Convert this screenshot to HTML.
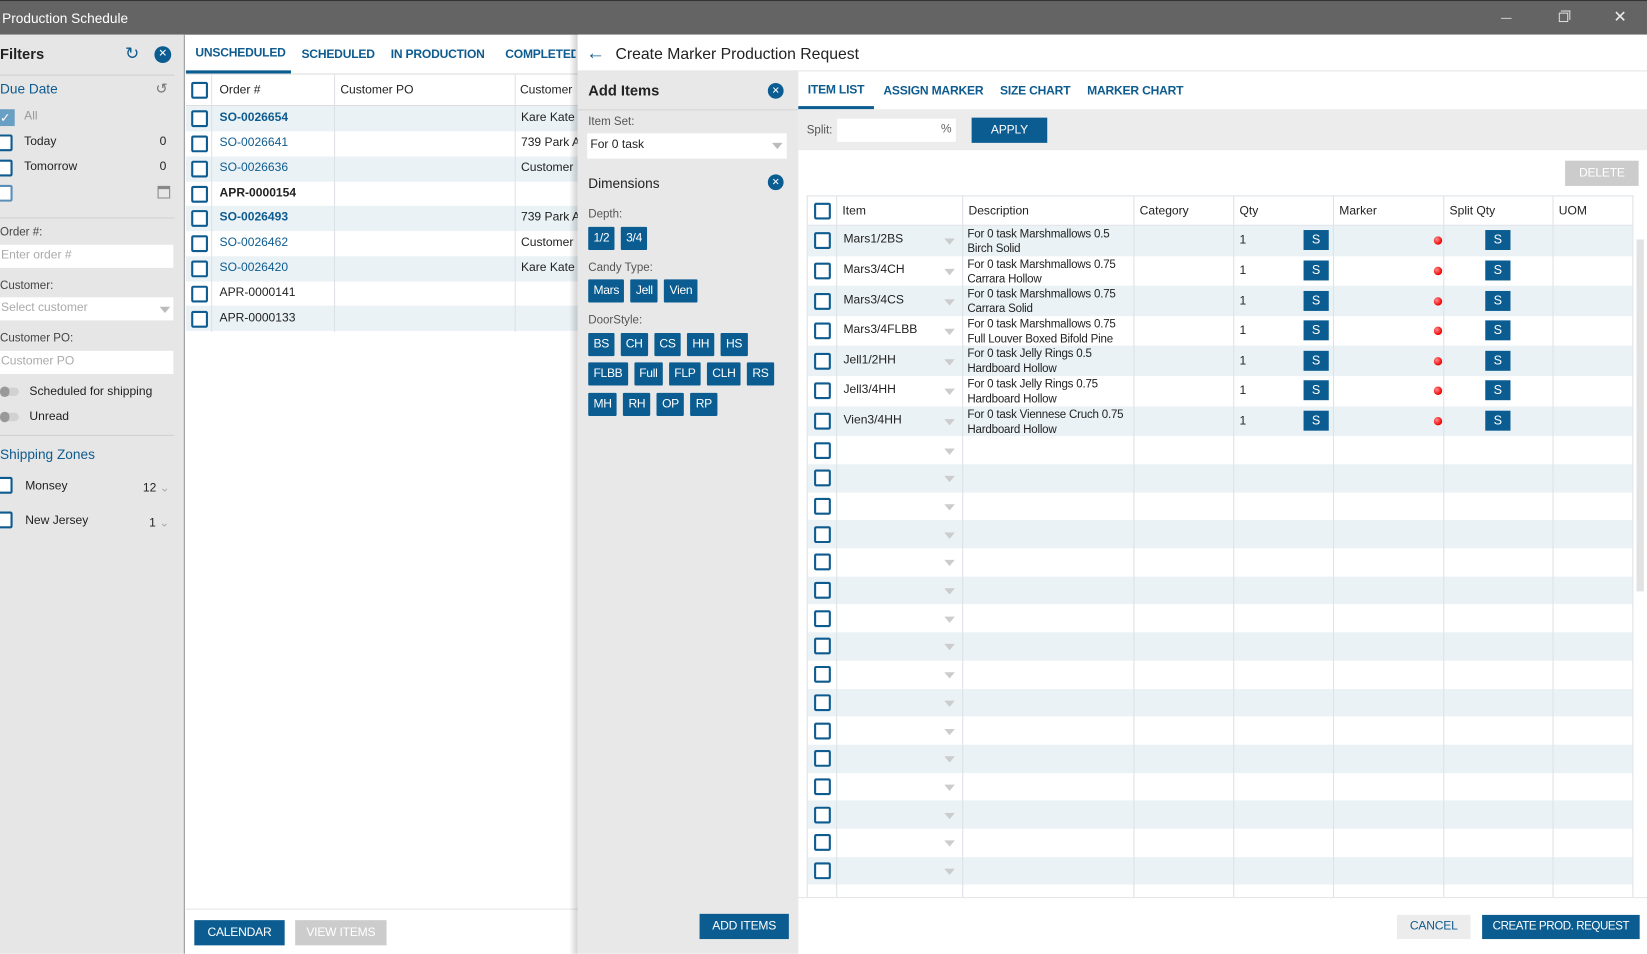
<!DOCTYPE html>
<html><head><meta charset="utf-8"><style>
*{box-sizing:border-box;margin:0;padding:0}
html,body{width:1647px;height:954px;overflow:hidden;background:#fff;font-family:"Liberation Sans",sans-serif;font-size:11.5px;color:#222}
#w{position:absolute;left:0;top:0;width:1568px;height:908px;transform:scale(1.0504);transform-origin:0 0}
.a{position:absolute;white-space:nowrap}
.cb{position:absolute;width:16px;height:16px;border:2px solid #0e5b8f;border-radius:2px;background:#fff}
.blue{color:#0e5b8f}
.tb{font-size:11.5px;letter-spacing:-0.2px}
.btn{position:absolute;background:#0a5c91;color:#fff;text-align:center;font-size:11.5px;white-space:nowrap;letter-spacing:-0.2px}
.tag{display:inline-block;background:#0a5c91;color:#fff;height:22px;line-height:22px;padding:0 5px;margin-right:6px;font-size:11.5px;border-radius:1px;letter-spacing:-0.3px}
.s{position:absolute;width:24px;height:19px;background:#0a5c91;color:#fff;text-align:center;line-height:19px;font-size:12px}
.dot{position:absolute;width:8px;height:8px;border-radius:50%;background:radial-gradient(circle at 35% 35%,#ff8a8a,#e00 70%)}
.vl{position:absolute;width:1px;background:#dde2e6}
.tri{position:absolute;width:0;height:0;border-left:5px solid transparent;border-right:5px solid transparent;border-top:6px solid #bbb}
</style></head><body><div id="w">
<div class="a" style="left:0;top:0;width:1568px;height:33px;background:#646464"></div>
<div class="a" style="left:0;top:0;width:1568px;height:1px;background:#333"></div>
<div class="a" style="left:2px;top:10px;color:#fff;font-size:13px">Production Schedule</div>
<div class="a" style="left:1429px;top:17px;width:10px;height:1px;background:#ccc"></div>
<div class="a" style="left:1484px;top:12px;width:9px;height:9px;border:1px solid #ddd"></div>
<div class="a" style="left:1486px;top:10px;width:9px;height:9px;border-top:1px solid #ddd;border-right:1px solid #ddd"></div>
<div class="a" style="left:1536px;top:7px;color:#eee;font-size:15px">✕</div>

<div class="a" style="left:0;top:33px;width:176px;height:875px;background:#e6e6e6;border-right:1px solid #999"></div>
<div class="a" style="left:0;top:43px;font-size:14px;font-weight:bold">Filters</div>
<div class="a blue" style="left:119px;top:41px;font-size:16px">↻</div>
<div class="a" style="left:147px;top:44px;width:16px;height:16px;border-radius:50%;background:#0a5c91;color:#fff;font-size:10px;text-align:center;line-height:16px">✕</div>
<div class="a" style="left:0;top:71px;width:166px;height:1px;background:#d0d0d0"></div>
<div class="a blue" style="left:0;top:77px;font-size:13px">Due Date</div>
<div class="a" style="left:148px;top:76px;color:#777;font-size:14px">↺</div>
<div class="a" style="left:0;top:104px;width:14px;height:16px;background:#6a9fc4;color:#fff;font-size:12px;line-height:16px">✓</div>
<div class="a" style="left:23px;top:105px;color:#999">All</div>
<div class="cb" style="left:-4px;top:128px"></div><div class="a" style="left:23px;top:129px">Today</div><div class="a" style="left:152px;top:129px">0</div>
<div class="cb" style="left:-4px;top:152px"></div><div class="a" style="left:23px;top:153px">Tomorrow</div><div class="a" style="left:152px;top:153px">0</div>
<div class="cb" style="left:-4px;top:176px;border-color:#5a8fb8"></div>
<div class="a" style="left:150px;top:177px;width:12px;height:12px;border:1px solid #888;border-top-width:3px"></div>
<div class="a" style="left:0;top:207px;width:166px;height:1px;background:#d0d0d0"></div>
<div class="a" style="left:0;top:215px;color:#444;font-size:11px">Order #:</div>
<div class="a" style="left:0;top:233px;width:165px;height:22px;background:#fff;color:#aaa;padding:4px 1px">Enter order #</div>
<div class="a" style="left:0;top:266px;color:#444;font-size:11px">Customer:</div>
<div class="a" style="left:0;top:283px;width:165px;height:22px;background:#fff;color:#aaa;padding:4px 1px">Select customer</div>
<div class="tri" style="left:152px;top:292px"></div>
<div class="a" style="left:0;top:316px;color:#444;font-size:11px">Customer PO:</div>
<div class="a" style="left:0;top:334px;width:165px;height:22px;background:#fff;color:#aaa;padding:4px 1px">Customer PO</div>
<div class="a" style="left:0;top:369px;width:18px;height:8px;border-radius:4px;background:#d2d2d2"></div><div class="a" style="left:0;top:368px;width:9px;height:10px;border-radius:5px;background:#999"></div>
<div class="a" style="left:28px;top:367px">Scheduled for shipping</div>
<div class="a" style="left:0;top:393px;width:18px;height:8px;border-radius:4px;background:#d2d2d2"></div><div class="a" style="left:0;top:392px;width:9px;height:10px;border-radius:5px;background:#999"></div>
<div class="a" style="left:28px;top:391px">Unread</div>
<div class="a" style="left:0;top:414px;width:166px;height:1px;background:#d0d0d0"></div>
<div class="a blue" style="left:0;top:425px;font-size:13px">Shipping Zones</div>
<div class="cb" style="left:-4px;top:454px"></div><div class="a" style="left:24px;top:457px">Monsey</div><div class="a" style="left:136px;top:457px">12 <span style="color:#aaa">⌄</span></div>
<div class="cb" style="left:-4px;top:487px"></div><div class="a" style="left:24px;top:490px">New Jersey</div><div class="a" style="left:142px;top:490px">1 <span style="color:#aaa">⌄</span></div>

<div class="a blue tb" style="left:186px;top:45px;font-weight:bold">UNSCHEDULED</div>
<div class="a blue tb" style="left:287px;top:46px;font-weight:bold">SCHEDULED</div>
<div class="a blue tb" style="left:372px;top:46px;font-weight:bold">IN PRODUCTION</div>
<div class="a blue tb" style="left:481px;top:46px;font-weight:bold;width:67px;overflow:hidden">COMPLETED</div>
<div class="a" style="left:177px;top:67px;width:100px;height:3px;background:#0a5c91"></div>
<div class="a" style="left:177px;top:70px;width:373px;height:1px;background:#ddd"></div>
<div class="a" style="left:177px;top:100px;width:373px;height:1px;background:#ddd"></div>
<div class="a" style="left:177px;top:101px;width:373px;height:24px;background:#eaf2f6"></div>
<div class="a" style="left:177px;top:149px;width:373px;height:24px;background:#eaf2f6"></div>
<div class="a" style="left:177px;top:196px;width:373px;height:24px;background:#eaf2f6"></div>
<div class="a" style="left:177px;top:244px;width:373px;height:24px;background:#eaf2f6"></div>
<div class="a" style="left:177px;top:291px;width:373px;height:24px;background:#eaf2f6"></div>
<div class="vl" style="left:201px;top:71px;height:245px"></div>
<div class="vl" style="left:318px;top:71px;height:245px"></div>
<div class="vl" style="left:490px;top:71px;height:245px"></div>
<div class="cb" style="left:182px;top:78px"></div><div class="a" style="left:209px;top:80px">Order #</div><div class="a" style="left:324px;top:80px">Customer PO</div><div class="a" style="left:495px;top:80px">Customer</div>
<div class="cb" style="left:182px;top:105px"></div><div class="a blue" style="left:209px;top:106px;font-weight:bold">SO-0026654</div><div class="a" style="left:496px;top:106px">Kare Kate</div>
<div class="cb" style="left:182px;top:129px"></div><div class="a blue" style="left:209px;top:130px">SO-0026641</div><div class="a" style="left:496px;top:130px">739 Park A</div>
<div class="cb" style="left:182px;top:153px"></div><div class="a blue" style="left:209px;top:154px">SO-0026636</div><div class="a" style="left:496px;top:154px">Customer</div>
<div class="cb" style="left:182px;top:177px"></div><div class="a" style="left:209px;top:178px;font-weight:bold">APR-0000154</div>
<div class="cb" style="left:182px;top:200px"></div><div class="a blue" style="left:209px;top:201px;font-weight:bold">SO-0026493</div><div class="a" style="left:496px;top:201px">739 Park A</div>
<div class="cb" style="left:182px;top:224px"></div><div class="a blue" style="left:209px;top:225px">SO-0026462</div><div class="a" style="left:496px;top:225px">Customer</div>
<div class="cb" style="left:182px;top:248px"></div><div class="a blue" style="left:209px;top:249px">SO-0026420</div><div class="a" style="left:496px;top:249px">Kare Kate</div>
<div class="cb" style="left:182px;top:272px"></div><div class="a" style="left:209px;top:273px">APR-0000141</div>
<div class="cb" style="left:182px;top:296px"></div><div class="a" style="left:209px;top:297px">APR-0000133</div>
<div class="a" style="left:177px;top:865px;width:373px;height:1px;background:#e6e6e6"></div>
<div class="btn" style="left:185px;top:876px;width:86px;height:24px;line-height:24px">CALENDAR</div>
<div class="btn" style="left:281px;top:876px;width:87px;height:24px;line-height:24px;background:#ccc">VIEW ITEMS</div>

<div class="a" style="left:542px;top:33px;width:8px;height:875px;background:linear-gradient(to right,rgba(0,0,0,0),rgba(0,0,0,.18))"></div>
<div class="a" style="left:550px;top:33px;width:1018px;height:35px;background:#fff;border-bottom:1px solid #e5e5e5"></div>
<div class="a blue" style="left:558px;top:40px;font-size:18px">←</div>
<div class="a" style="left:586px;top:43px;font-size:15px">Create Marker Production Request</div>
<div class="a" style="left:550px;top:68px;width:210px;height:840px;background:#e8e8e8"></div>
<div class="a" style="left:560px;top:78px;font-size:14px;font-weight:bold">Add Items</div>
<div class="a" style="left:731px;top:79px;width:15px;height:15px;border-radius:50%;background:#0a5c91;color:#fff;font-size:9px;text-align:center;line-height:15px">✕</div>
<div class="a" style="left:550px;top:104px;width:210px;height:1px;background:#d5d5d5"></div>
<div class="a" style="left:560px;top:110px;color:#555;font-size:11px">Item Set:</div>
<div class="a" style="left:559px;top:127px;width:190px;height:24px;background:#fff;padding:5px 3px">For 0 task</div>
<div class="tri" style="left:735px;top:136px"></div>
<div class="a" style="left:560px;top:167px;font-size:13px">Dimensions</div>
<div class="a" style="left:731px;top:166px;width:15px;height:15px;border-radius:50%;background:#0a5c91;color:#fff;font-size:9px;text-align:center;line-height:15px">✕</div>
<div class="a" style="left:560px;top:198px;color:#555;font-size:11px">Depth:</div>
<div class="a" style="left:560px;top:216px"><span class="tag">1/2</span><span class="tag">3/4</span></div>
<div class="a" style="left:560px;top:249px;color:#555;font-size:11px">Candy Type:</div>
<div class="a" style="left:560px;top:266px"><span class="tag">Mars</span><span class="tag">Jell</span><span class="tag">Vien</span></div>
<div class="a" style="left:560px;top:299px;color:#555;font-size:11px">DoorStyle:</div>
<div class="a" style="left:560px;top:317px"><span class="tag">BS</span><span class="tag">CH</span><span class="tag">CS</span><span class="tag">HH</span><span class="tag">HS</span></div>
<div class="a" style="left:560px;top:345px"><span class="tag">FLBB</span><span class="tag">Full</span><span class="tag">FLP</span><span class="tag">CLH</span><span class="tag">RS</span></div>
<div class="a" style="left:560px;top:374px"><span class="tag">MH</span><span class="tag">RH</span><span class="tag">OP</span><span class="tag">RP</span></div>
<div class="btn" style="left:666px;top:870px;width:85px;height:24px;line-height:24px">ADD ITEMS</div>
<div class="a blue tb" style="left:769px;top:80px;font-weight:bold">ITEM LIST</div>
<div class="a blue tb" style="left:841px;top:81px;font-weight:bold">ASSIGN MARKER</div>
<div class="a blue tb" style="left:952px;top:81px;font-weight:bold">SIZE CHART</div>
<div class="a blue tb" style="left:1035px;top:81px;font-weight:bold">MARKER CHART</div>
<div class="a" style="left:760px;top:101px;width:72px;height:3px;background:#0a5c91"></div>
<div class="a" style="left:760px;top:104px;width:808px;height:39px;background:#ececec"></div>
<div class="a" style="left:768px;top:118px;color:#555;font-size:11px">Split:</div>
<div class="a" style="left:797px;top:113px;width:113px;height:22px;background:#fff;text-align:right;padding:4px 4px;color:#666">%</div>
<div class="btn" style="left:925px;top:112px;width:72px;height:24px;line-height:24px">APPLY</div>
<div class="btn" style="left:1490px;top:153px;width:70px;height:24px;line-height:24px;background:#ccc">DELETE</div>
<div id="tbl" class="a" style="left:768px;top:186px;width:787px;height:668px;border:1px solid #dde2e6;border-bottom:none;overflow:hidden"></div>
<div class="a" style="left:1558px;top:228px;width:7px;height:335px;background:#e2e2e2"></div>
<div class="a" style="left:760px;top:854px;width:808px;height:1px;background:#e5e5e5"></div>
<div class="btn" style="left:1330px;top:871px;width:70px;height:23px;line-height:23px;background:#ececec;color:#0e5b8f">CANCEL</div>
<div class="btn" style="left:1411px;top:871px;width:150px;height:23px;line-height:23px;font-size:11px;letter-spacing:-0.4px">CREATE PROD. REQUEST</div>
</div>
<script>
var t=document.getElementById('tbl'),h='';
var cols=[27,147,310,405,500,605,709];
h+='<div class="a" style="left:0;top:0;width:787px;height:28px;border-bottom:1px solid #dde2e6"></div>';
h+='<div class="cb" style="left:6px;top:6px"></div>';
var hd=['Item','Description','Category','Qty','Marker','Split Qty','UOM'];
for(var i=0;i<hd.length;i++)h+='<div class="a" style="left:'+(cols[i]+6)+'px;top:8px">'+hd[i]+'</div>';
var d=[['Mars1/2BS','For 0 task Marshmallows 0.5','Birch Solid'],['Mars3/4CH','For 0 task Marshmallows 0.75','Carrara Hollow'],['Mars3/4CS','For 0 task Marshmallows 0.75','Carrara Solid'],['Mars3/4FLBB','For 0 task Marshmallows 0.75','Full Louver Boxed Bifold Pine'],['Jell1/2HH','For 0 task Jelly Rings 0.5','Hardboard Hollow'],['Jell3/4HH','For 0 task Jelly Rings 0.75','Hardboard Hollow'],['Vien3/4HH','For 0 task Viennese Cruch 0.75','Hardboard Hollow']];
var y=28;
for(var r=0;r<23;r++){
 var rh=r<7?28.6:26.7;
 if(r%2==0)h+='<div class="a" style="left:0;top:'+y+'px;width:787px;height:'+rh+'px;background:#eaf2f6"></div>';
 var cy=y+rh/2;
 h+='<div class="cb" style="left:6px;top:'+(cy-8)+'px"></div>';
 h+='<div class="tri" style="left:130px;top:'+(cy-2)+'px;border-top-color:#ccc"></div>';
 if(r<7){
  h+='<div class="a" style="left:34px;top:'+(cy-7)+'px">'+d[r][0]+'</div>';
  h+='<div class="a" style="left:152px;top:'+(y+1)+'px;line-height:14px;font-size:11px;letter-spacing:-0.2px">'+d[r][1]+'<br>'+d[r][2]+'</div>';
  h+='<div class="a" style="left:411px;top:'+(cy-6)+'px">1</div>';
  h+='<div class="s" style="left:472px;top:'+(cy-10)+'px">S</div>';
  h+='<div class="dot" style="left:596px;top:'+(cy-4)+'px"></div>';
  h+='<div class="s" style="left:645px;top:'+(cy-10)+'px">S</div>';
 }
 y+=rh;
}
for(var i=0;i<cols.length;i++)h+='<div class="vl" style="left:'+cols[i]+'px;top:0;height:668px"></div>';
t.innerHTML=h;
</script>
</body></html>
